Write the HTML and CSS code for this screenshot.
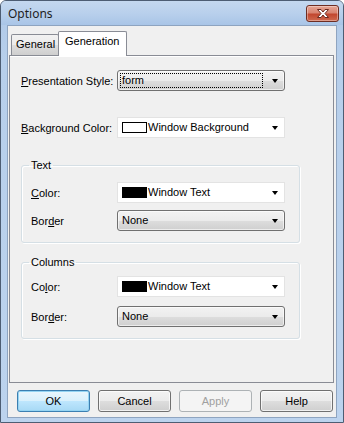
FILE: index.html
```html
<!DOCTYPE html>
<html>
<head>
<meta charset="utf-8">
<link rel="stylesheet" href="styles.css">
</head>
<body>
<div class="window">
  <div class="titlebar">
    <span class="title">Options</span>
    <div class="close">
      <svg width="16" height="11" viewBox="0 0 16 11"><path d="M2.5 1.5 H6 L8 4 L10 1.5 H13.5 L10 5.5 L13.5 9.5 H10 L8 7 L6 9.5 H2.5 L6 5.5 Z" fill="#fff" stroke="#6b2a20" stroke-width="1" stroke-linejoin="round"/></svg>
    </div>
  </div>
  <div class="client">
    <div class="tabs">
      <div class="tab">General</div>
      <div class="tab active">Generation</div>
    </div>
    <div class="panel">
      <div class="row row-first">
        <label class="lbl"><u>P</u>resentation Style:</label>
        <div class="combo dd"><span class="focus">form</span><span class="arrow"></span></div>
      </div>
      <div class="row row-bg">
        <label class="lbl"><u>B</u>ackground Color:</label>
        <div class="combo white"><span class="swatch"></span><span class="val">Window Background</span><span class="arrow"></span></div>
      </div>
      <fieldset class="group group-text">
        <legend>Text</legend>
        <div class="row">
          <label class="lbl glbl"><u>C</u>olor:</label>
          <div class="combo white"><span class="swatch black"></span><span class="val">Window Text</span><span class="arrow"></span></div>
        </div>
        <div class="row row-gap">
          <label class="lbl glbl">Bor<u>d</u>er</label>
          <div class="combo dd"><span class="val">None</span><span class="arrow"></span></div>
        </div>
      </fieldset>
      <fieldset class="group group-cols">
        <legend>Columns</legend>
        <div class="row">
          <label class="lbl glbl">Co<u>l</u>or:</label>
          <div class="combo white"><span class="swatch black"></span><span class="val">Window Text</span><span class="arrow"></span></div>
        </div>
        <div class="row row-gap2">
          <label class="lbl glbl">Bor<u>d</u>er:</label>
          <div class="combo dd"><span class="val">None</span><span class="arrow"></span></div>
        </div>
      </fieldset>
    </div>
    <div class="buttons">
      <div class="btn default">OK</div>
      <div class="btn">Cancel</div>
      <div class="btn disabled">Apply</div>
      <div class="btn">Help</div>
    </div>
  </div>
</div>
</body>
</html>
```
FILE: styles.css
```css
html, body {
  margin: 0;
  padding: 0;
  background: #ffffff;
}
body {
  font-family: "Liberation Sans", Arial, sans-serif;
  font-size: 11px;
  color: #000;
}
.window {
  width: 344px;
  height: 423px;
  box-sizing: border-box;
  border: 1px solid #4d5d73;
  border-radius: 6px 6px 0 0;
  background: linear-gradient(180deg, #c3d7ef 0px, #b2cbe9 24px, #b7cfeb 60px, #bcd3ee 100%);
  display: flex;
  flex-direction: column;
  padding: 0 6px 4px 6px;
}
.titlebar {
  height: 24px;
  flex: none;
  display: flex;
  align-items: center;
  position: relative;
  margin: 0 -6px;
  padding: 0 0 0 7px;
  background: linear-gradient(180deg, #c4d8ef 0%, #b9d0ec 50%, #a9c5e7 100%);
  border-radius: 5px 5px 0 0;
}
.title {
  font-family: "Noto Sans", "Open Sans", sans-serif;
  font-size: 12px;
  color: #1e1e1e;
  margin-top: 1px;
}
.close {
  position: absolute;
  right: 4px;
  top: 4px;
  width: 31px;
  height: 15px;
  border: 1px solid #6e2d22;
  border-radius: 3px;
  background: linear-gradient(180deg, #e6a594 0%, #d88471 45%, #c2472f 55%, #cf6a4f 100%);
  box-shadow: inset 0 0 0 1px rgba(255,255,255,0.35);
  display: flex;
  align-items: center;
  justify-content: center;
}
.client {
  flex: 1;
  background: #f0f0f0;
  border: 1px solid #8ea4c0;
  display: flex;
  flex-direction: column;
}
.tabs {
  display: flex;
  align-items: flex-end;
  padding: 5px 0 0 3px;
  height: 24px;
  flex: none;
}
.tab {
  width: 48px;
  height: 21px;
  box-sizing: border-box;
  border: 1px solid #898c95;
  border-bottom: none;
  padding: 3px 0 0 4px;
  background: linear-gradient(180deg, #f2f2f2 0%, #ebebeb 50%, #dddddd 51%, #cfcfcf 100%);
  border-radius: 2px 2px 0 0;
  white-space: nowrap;
}
.tab.active {
  width: 69px;
  height: 25px;
  margin-bottom: -1px;
  position: relative;
  z-index: 1;
  background: #ffffff;
  padding: 3px 0 0 6px;
  margin-left: -1px;
}
.panel {
  margin: 0 2px 0 1px;
  height: 328px;
  box-sizing: border-box;
  border: 1px solid #898c95;
  background: #f0f0f0;
  box-shadow: inset 0 1px 0 #fff;
  padding: 14px 0 0 11px;
  flex: none;
}
.row {
  display: flex;
  align-items: center;
}
.row-bg { margin-top: 26px; }
.lbl {
  width: 96px;
  flex: none;
}
.glbl { width: 86px; }
.combo {
  width: 168px;
  height: 21px;
  box-sizing: border-box;
  display: flex;
  align-items: center;
  position: relative;
  flex: none;
}
.combo.dd {
  border: 1px solid #707070;
  border-radius: 3px;
  background: linear-gradient(180deg, #f2f2f2 0%, #ebebeb 50%, #dddddd 51%, #cfcfcf 100%);
  box-shadow: inset 0 0 0 1px rgba(255,255,255,0.6);
  padding-left: 4px;
}
.combo.white {
  border: 1px solid #e3e3e3;
  background: #fff;
  padding-left: 4px;
}
.focus {
  display: block;
  width: 143px;
  height: 15px;
  box-sizing: border-box;
  border: 1px dotted #000;
  margin-left: -2px;
  padding-left: 1px;
  line-height: 13px;
}
.val { line-height: 13px; }
.swatch {
  width: 25px;
  height: 11px;
  box-sizing: border-box;
  border: 1px solid #000;
  background: #fff;
  margin-right: 1px;
  flex: none;
}
.swatch.black { background: #000; }
.arrow {
  position: absolute;
  right: 6px;
  top: 8px;
  width: 0;
  height: 0;
  border-left: 3.5px solid transparent;
  border-right: 3.5px solid transparent;
  border-top: 4px solid #000;
}
.group {
  margin: 0;
  width: 279px;
  box-sizing: border-box;
  border: 1px solid #d5dfe5;
  border-radius: 3px;
  box-shadow: inset 1px 1px 0 #fff, 1px 1px 0 #fff;
  padding: 0 0 0 9px;
}
.group legend {
  padding: 0 2px;
  margin-left: -2px;
  line-height: 13px;
}
.group-text {
  margin-top: 21px;
  padding-top: 10px;
  height: 84px;
}
.group-cols {
  margin-top: 13px;
  padding-top: 7px;
  height: 83px;
}
.row-gap { margin-top: 7px; }
.row-gap2 { margin-top: 9px; }
.buttons {
  display: flex;
  gap: 8px;
  padding: 7px 0 0 9px;
}
.btn {
  width: 73px;
  height: 22px;
  box-sizing: border-box;
  border: 1px solid #707070;
  border-radius: 3px;
  background: linear-gradient(180deg, #f2f2f2 0%, #ebebeb 50%, #dddddd 51%, #cfcfcf 100%);
  box-shadow: inset 0 0 0 1px rgba(255,255,255,0.7);
  display: flex;
  align-items: center;
  justify-content: center;
}
.btn.default {
  border-color: #3c7fb1;
  background: linear-gradient(180deg, #eaf6fd 0%, #d9f0fc 50%, #bee6fd 51%, #a7d9f5 100%);
  box-shadow: inset 0 0 0 1px #95d4f3;
}
.btn.disabled {
  border-color: #adb2b5;
  background: #f4f4f4;
  color: #a0a0a0;
  box-shadow: none;
}
```
